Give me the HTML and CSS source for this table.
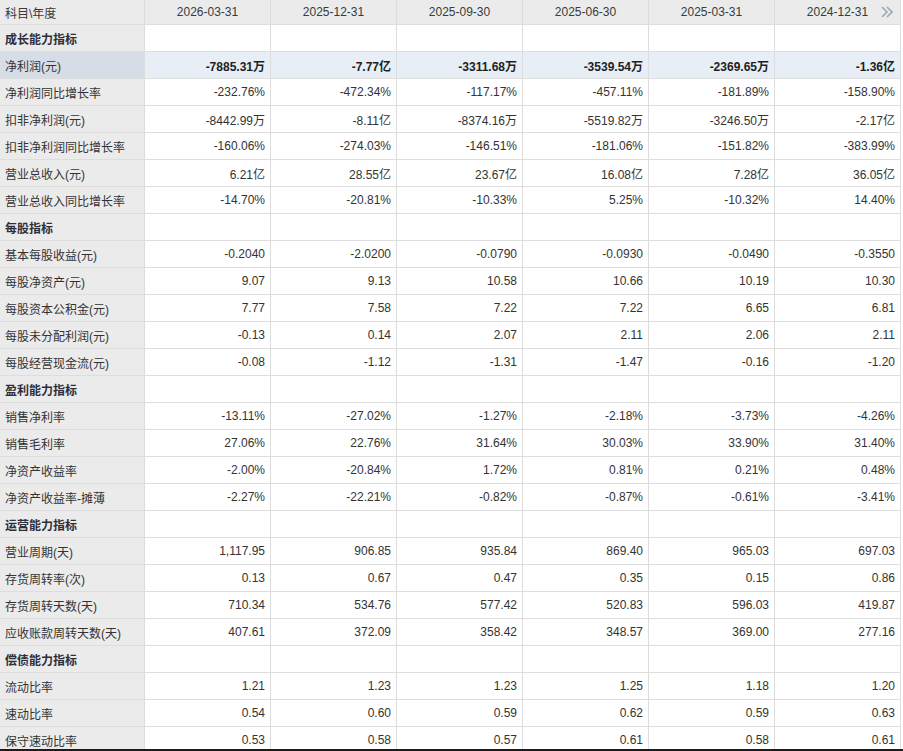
FILE: index.html
```html
<!DOCTYPE html>
<html lang="zh-CN">
<head>
<meta charset="utf-8">
<title>主要指标</title>
<link rel="stylesheet" href="styles.css">
</head>
<body>
<div class="frame">
<table class="fin">
<colgroup><col class="c-label"><col class="c-val"><col class="c-val"><col class="c-val"><col class="c-val"><col class="c-val"><col class="c-val"></colgroup>
<thead>
<tr><th class="lbl">科目\年度</th><th>2026-03-31</th><th>2025-12-31</th><th>2025-09-30</th><th>2025-06-30</th><th>2025-03-31</th><th class="last">2024-12-31<svg class="more" width="12" height="12" viewBox="0 0 12 12"><polyline points="1,1 6,6 1,11" fill="none" stroke="#9ea8b3" stroke-width="1.6"/><polyline points="6,1 11,6 6,11" fill="none" stroke="#9ea8b3" stroke-width="1.6"/></svg></th></tr>
</thead>
<tbody>
<tr class="sec"><td class="lbl">成长能力指标</td><td></td><td></td><td></td><td></td><td></td><td></td></tr>
<tr class="hl"><td class="lbl">净利润(元)</td><td>-7885.31万</td><td>-7.77亿</td><td>-3311.68万</td><td>-3539.54万</td><td>-2369.65万</td><td>-1.36亿</td></tr>
<tr><td class="lbl">净利润同比增长率</td><td>-232.76%</td><td>-472.34%</td><td>-117.17%</td><td>-457.11%</td><td>-181.89%</td><td>-158.90%</td></tr>
<tr><td class="lbl">扣非净利润(元)</td><td>-8442.99万</td><td>-8.11亿</td><td>-8374.16万</td><td>-5519.82万</td><td>-3246.50万</td><td>-2.17亿</td></tr>
<tr><td class="lbl">扣非净利润同比增长率</td><td>-160.06%</td><td>-274.03%</td><td>-146.51%</td><td>-181.06%</td><td>-151.82%</td><td>-383.99%</td></tr>
<tr><td class="lbl">营业总收入(元)</td><td>6.21亿</td><td>28.55亿</td><td>23.67亿</td><td>16.08亿</td><td>7.28亿</td><td>36.05亿</td></tr>
<tr><td class="lbl">营业总收入同比增长率</td><td>-14.70%</td><td>-20.81%</td><td>-10.33%</td><td>5.25%</td><td>-10.32%</td><td>14.40%</td></tr>
<tr class="sec"><td class="lbl">每股指标</td><td></td><td></td><td></td><td></td><td></td><td></td></tr>
<tr><td class="lbl">基本每股收益(元)</td><td>-0.2040</td><td>-2.0200</td><td>-0.0790</td><td>-0.0930</td><td>-0.0490</td><td>-0.3550</td></tr>
<tr><td class="lbl">每股净资产(元)</td><td>9.07</td><td>9.13</td><td>10.58</td><td>10.66</td><td>10.19</td><td>10.30</td></tr>
<tr><td class="lbl">每股资本公积金(元)</td><td>7.77</td><td>7.58</td><td>7.22</td><td>7.22</td><td>6.65</td><td>6.81</td></tr>
<tr><td class="lbl">每股未分配利润(元)</td><td>-0.13</td><td>0.14</td><td>2.07</td><td>2.11</td><td>2.06</td><td>2.11</td></tr>
<tr><td class="lbl">每股经营现金流(元)</td><td>-0.08</td><td>-1.12</td><td>-1.31</td><td>-1.47</td><td>-0.16</td><td>-1.20</td></tr>
<tr class="sec"><td class="lbl">盈利能力指标</td><td></td><td></td><td></td><td></td><td></td><td></td></tr>
<tr><td class="lbl">销售净利率</td><td>-13.11%</td><td>-27.02%</td><td>-1.27%</td><td>-2.18%</td><td>-3.73%</td><td>-4.26%</td></tr>
<tr><td class="lbl">销售毛利率</td><td>27.06%</td><td>22.76%</td><td>31.64%</td><td>30.03%</td><td>33.90%</td><td>31.40%</td></tr>
<tr><td class="lbl">净资产收益率</td><td>-2.00%</td><td>-20.84%</td><td>1.72%</td><td>0.81%</td><td>0.21%</td><td>0.48%</td></tr>
<tr><td class="lbl">净资产收益率-摊薄</td><td>-2.27%</td><td>-22.21%</td><td>-0.82%</td><td>-0.87%</td><td>-0.61%</td><td>-3.41%</td></tr>
<tr class="sec"><td class="lbl">运营能力指标</td><td></td><td></td><td></td><td></td><td></td><td></td></tr>
<tr><td class="lbl">营业周期(天)</td><td>1,117.95</td><td>906.85</td><td>935.84</td><td>869.40</td><td>965.03</td><td>697.03</td></tr>
<tr><td class="lbl">存货周转率(次)</td><td>0.13</td><td>0.67</td><td>0.47</td><td>0.35</td><td>0.15</td><td>0.86</td></tr>
<tr><td class="lbl">存货周转天数(天)</td><td>710.34</td><td>534.76</td><td>577.42</td><td>520.83</td><td>596.03</td><td>419.87</td></tr>
<tr><td class="lbl">应收账款周转天数(天)</td><td>407.61</td><td>372.09</td><td>358.42</td><td>348.57</td><td>369.00</td><td>277.16</td></tr>
<tr class="sec"><td class="lbl">偿债能力指标</td><td></td><td></td><td></td><td></td><td></td><td></td></tr>
<tr><td class="lbl">流动比率</td><td>1.21</td><td>1.23</td><td>1.23</td><td>1.25</td><td>1.18</td><td>1.20</td></tr>
<tr><td class="lbl">速动比率</td><td>0.54</td><td>0.60</td><td>0.59</td><td>0.62</td><td>0.59</td><td>0.63</td></tr>
<tr><td class="lbl">保守速动比率</td><td>0.53</td><td>0.58</td><td>0.57</td><td>0.61</td><td>0.58</td><td>0.61</td></tr>
</tbody>
</table>
</div>
</body>
</html>
```

FILE: styles.css
```css
html, body {
  margin: 0;
  padding: 0;
  background: #ffffff;
}

.frame {
  width: 903px;
  height: 749px;
  overflow: hidden;
  border-bottom: 2px solid #1c1c1c;
}

.fin {
  table-layout: fixed;
  width: 901px;
  border-collapse: separate;
  border-spacing: 0;
  font-family: "Liberation Sans", "Noto Sans CJK SC", sans-serif;
  font-size: 12px;
  color: #333333;
}

.c-label { width: 145px; }
.c-val { width: 126px; }

.fin th,
.fin td {
  box-sizing: border-box;
  border-right: 1px solid #dddddd;
  border-bottom: 1px solid #dddddd;
  padding: 0 5px;
  white-space: nowrap;
  overflow: hidden;
}

.fin th {
  height: 25px;
  background: #ebebeb;
  font-weight: normal;
  text-align: center;
  color: #3a3a3a;
}

.fin th.lbl {
  text-align: left;
}

.fin th.last {
  position: relative;
}

.more {
  position: absolute;
  right: 7px;
  top: 6px;
}

.fin td {
  height: 27px;
  text-align: right;
  background: #ffffff;
}

.fin td.lbl {
  text-align: left;
  background: #ebebeb;
}

.sec td.lbl {
  font-weight: bold;
  color: #2f2f3a;
}

.hl td {
  background: #e7eef6;
  font-weight: bold;
  color: #1e1e1e;
}

.hl td.lbl {
  background: #d6dde6;
  font-weight: normal;
  color: #333333;
}
```
